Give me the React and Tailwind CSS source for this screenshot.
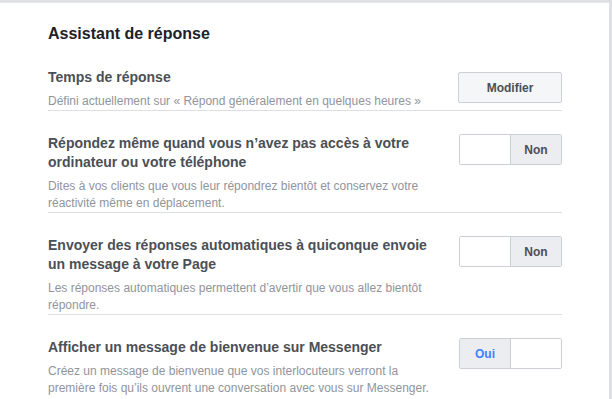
const rows = [
  {
    title: "Temps de réponse",
    desc: "Défini actuellement sur « Répond généralement en quelques heures »",
    control: "button",
  },
  {
    title: "Répondez même quand vous n’avez pas accès à votre ordinateur ou votre téléphone",
    desc: "Dites à vos clients que vous leur répondrez bientôt et conservez votre réactivité même en déplacement.",
    control: "off",
  },
  {
    title: "Envoyer des réponses automatiques à quiconque envoie un message à votre Page",
    desc: "Les réponses automatiques permettent d’avertir que vous allez bientôt répondre.",
    control: "off",
  },
  {
    title: "Afficher un message de bienvenue sur Messenger",
    desc: "Créez un message de bienvenue que vos interlocuteurs verront la première fois qu’ils ouvrent une conversation avec vous sur Messenger.",
    control: "on",
  },
];

function Toggle({ on }) {
  return (
    <div className="flex h-[31px] w-[103px] rounded-[2px] border border-[#ccd0d5] overflow-hidden text-[12px] font-bold">
      {on ? (
        <>
          <div className="flex w-[51px] items-center justify-center bg-[#ebedf0] text-[#4080ff] border-r border-[#ccd0d5]">
            Oui
          </div>
          <div className="flex-1 bg-white"></div>
        </>
      ) : (
        <>
          <div className="w-[51px] bg-white border-r border-[#ccd0d5]"></div>
          <div className="flex flex-1 items-center justify-center bg-[#ebedf0] text-[#4b4f56]">
            Non
          </div>
        </>
      )}
    </div>
  );
}

export default function App() {
  return (
    <div
      className="h-[399px] w-[612px] overflow-hidden bg-[#dddfe2] pt-[2px]"
      style={{ fontFamily: '"Liberation Sans", Arial, sans-serif' }}
    >
      <div className="flex h-full w-[609px] flex-col bg-white border-t border-[#e5e6e9] pl-12">
        {/* Header */}
        <h2 className="mt-[21px] text-[16px] leading-[20px] font-bold text-[#1d2129]">
          Assistant de réponse
        </h2>

        <div className="w-[514px]">
          {rows.map((row, i) => (
            <div
              key={i}
              className={`flex justify-between ${i === 0 ? "pt-[24px]" : "pt-[23px]"} ${
                i < rows.length - 1 ? "border-b border-[#dddfe2]" : "pb-[6px]"
              }`}
            >
              <div className="w-[388px]">
                <div className="text-[14px] leading-[19px] font-bold text-[#4b4f56]">
                  {row.title}
                </div>
                <div className="mt-[6px] text-[12px] leading-[17px] text-[#90949c]">
                  {row.desc}
                </div>
              </div>
              <div>
                {row.control === "button" ? (
                  <button className="mt-[4px] h-[31px] w-[104px] rounded-[2px] border border-[#ccd0d5] bg-[#f5f6f7] text-[12px] font-bold text-[#4b4f56]">
                    Modifier
                  </button>
                ) : (
                  <Toggle on={row.control === "on"} />
                )}
              </div>
            </div>
          ))}
          <div className="h-[20px] bg-[#f6f7f9]"></div>
        </div>
      </div>
    </div>
  );
}
